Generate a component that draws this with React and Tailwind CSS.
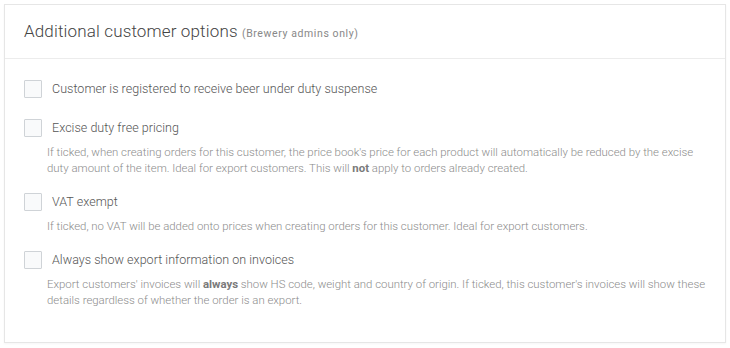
const options = [
  {
    label: "Customer is registered to receive beer under duty suspense",
  },
  {
    label: "Excise duty free pricing",
    help: (
      <>
        If ticked, when creating orders for this customer, the price book's price for each product will
        automatically be reduced by the excise duty amount of the item. Ideal for export customers. This will{" "}
        <strong className="font-bold text-[#7a7a7a]">not</strong> apply to orders already created.
      </>
    ),
  },
  {
    label: "VAT exempt",
    help: "If ticked, no VAT will be added onto prices when creating orders for this customer. Ideal for export customers.",
  },
  {
    label: "Always show export information on invoices",
    help: (
      <>
        Export customers' invoices will <strong className="font-bold text-[#7a7a7a]">always</strong> show HS code,
        weight and country of origin. If ticked, this customer's invoices will show these details regardless of
        whether the order is an export.
      </>
    ),
  },
];

const Option = ({ option, first }) => (
  <div className={first ? "mb-[21px]" : "mb-[17px]"}>
    <label className="flex items-center gap-[10px] h-[18px]">
      <span className="w-[18px] h-[18px] border border-[#cfd3d7] bg-[#f9fafb] rounded-[1px] shrink-0" />
      <span className="text-[12.5px] font-light text-[#555] tracking-[0.03px] leading-[18px]">{option.label}</span>
    </label>
    {option.help && (
      <p className="mt-[7px] ml-[23px] text-[11.4px] font-light leading-[16px] text-[#8c8c8c]">{option.help}</p>
    )}
  </div>
);

export default function App() {
  return (
    <div className="bg-white p-[4px] w-[730px] h-[348px]" style={{ fontFamily: "Roboto, 'Open Sans', sans-serif" }}>
      <div className="border border-[#e6e6e6] bg-white h-[339px] shadow-[0_1px_2px_rgba(0,0,0,0.04)]">
        <div className="h-[54px] border-b border-[#ececec] flex items-center px-[19px]">
          <h2 className="text-[17px] font-light text-[#444] tracking-[0.15px]">
            Additional customer options{" "}
            <span className="text-[10.5px] font-normal text-[#888] tracking-[0.6px]">(Brewery admins only)</span>
          </h2>
        </div>
        <div className="pt-[21px] px-[19px]">
          {options.map((o, i) => (
            <Option key={i} option={o} first={i === 0} />
          ))}
        </div>
      </div>
    </div>
  );
}
